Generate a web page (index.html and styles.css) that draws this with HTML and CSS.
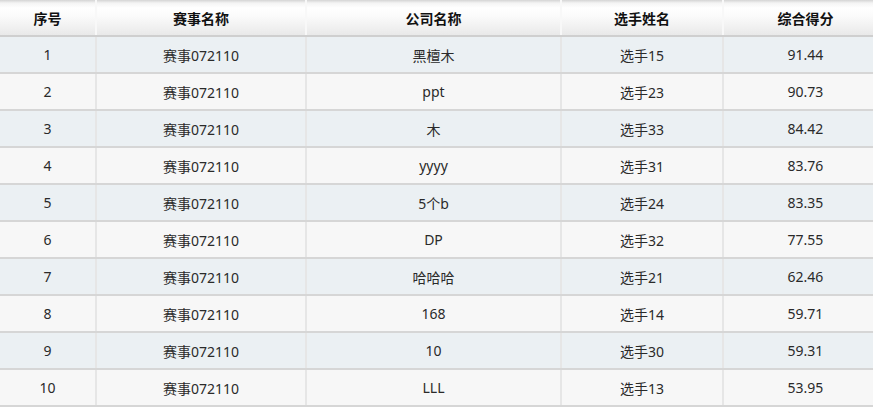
FILE: index.html
```html
<!DOCTYPE html>
<html lang="zh-CN">
<head>
<meta charset="utf-8">
<title>排名</title>
<link rel="stylesheet" href="styles.css">
</head>
<body>
<div class="wrap">
<table class="rank">
<colgroup>
<col class="c1"><col class="c2"><col class="c3"><col class="c4"><col class="c5">
</colgroup>
<thead>
<tr><th>序号</th><th>赛事名称</th><th>公司名称</th><th>选手姓名</th><th>综合得分</th></tr>
</thead>
<tbody>
<tr><td>1</td><td>赛事072110</td><td>黑檀木</td><td>选手15</td><td>91.44</td></tr>
<tr><td>2</td><td>赛事072110</td><td>ppt</td><td>选手23</td><td>90.73</td></tr>
<tr><td>3</td><td>赛事072110</td><td>木</td><td>选手33</td><td>84.42</td></tr>
<tr><td>4</td><td>赛事072110</td><td>yyyy</td><td>选手31</td><td>83.76</td></tr>
<tr><td>5</td><td>赛事072110</td><td>5个b</td><td>选手24</td><td>83.35</td></tr>
<tr><td>6</td><td>赛事072110</td><td>DP</td><td>选手32</td><td>77.55</td></tr>
<tr><td>7</td><td>赛事072110</td><td>哈哈哈</td><td>选手21</td><td>62.46</td></tr>
<tr><td>8</td><td>赛事072110</td><td>168</td><td>选手14</td><td>59.71</td></tr>
<tr><td>9</td><td>赛事072110</td><td>10</td><td>选手30</td><td>59.31</td></tr>
<tr><td>10</td><td>赛事072110</td><td>LLL</td><td>选手13</td><td>53.95</td></tr>
</tbody>
</table>
</div>
</body>
</html>
```
FILE: styles.css
```css
html, body {
  margin: 0;
  padding: 0;
  background: #fff;
  overflow: hidden;
}
.wrap {
  width: 873px;
  overflow: hidden;
}
.rank {
  width: 888px;
  border-collapse: collapse;
  table-layout: fixed;
  font-family: "Noto Sans", "Noto Sans CJK SC", sans-serif;
  font-size: 14px;
  color: #2a2a2a;
}
.c1 { width: 96px; }
.c2 { width: 210px; }
.c3 { width: 255px; }
.c4 { width: 162px; }
.c5 { width: 165px; }
.rank th, .rank td {
  text-align: center;
  padding: 0;
  border-left: 2px solid #e6e6e6;
  border-right: 2px solid #e6e6e6;
}
.rank th:first-child, .rank td:first-child { border-left: none; }
.rank th {
  height: 35px;
  font-weight: bold;
  color: #111;
  background: linear-gradient(#d4d4d4 0, #f4f4f4 3px, #ffffff 8px, #fbfbfb 45%, #e9e9e9 100%);
  border-bottom: 2px solid #cfcfcf;
  border-left-color: #f8f8f8;
  border-right-color: #f8f8f8;
}
.rank td {
  height: 35px;
  border-bottom: 2px solid #d6d6d6;
}
.rank tbody tr:nth-child(odd) td { background: #ebf0f3; }
.rank tbody tr:nth-child(even) td { background: #f7f7f7; }
```
